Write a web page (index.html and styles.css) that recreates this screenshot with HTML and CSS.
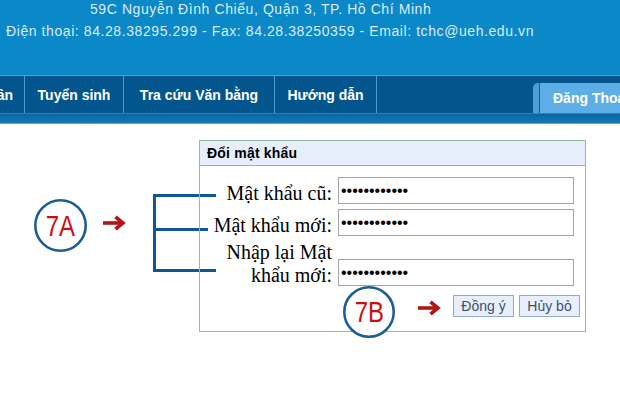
FILE: index.html
```html
<!DOCTYPE html>
<html lang="vi">
<head>
<meta charset="utf-8">
<title>Đổi mật khẩu</title>
<link rel="stylesheet" href="styles.css">
</head>
<body>
<header class="top">
  <div class="addr">59C Nguyễn Đình Chiểu, Quận 3, TP. Hồ Chí Minh</div>
  <div class="contact">Điện thoại: 84.28.38295.299 - Fax: 84.28.38250359 - Email: tchc@ueh.edu.vn</div>
</header>
<nav class="nav">
  <div class="nav-item nav-item--cut"><span>Học phần</span></div>
  <div class="nav-item nav-item--tuyen">Tuyển sinh</div>
  <div class="nav-item nav-item--tracuu">Tra cứu Văn bằng</div>
  <div class="nav-item nav-item--huongdan">Hướng dẫn</div>
  <div class="tab"><span class="tab-edge"></span><span class="tab-body">Đăng Thoát</span></div>
</nav>
<div class="subbar"></div>
<main class="content">
  <div class="bracket"></div>
  <div class="badge badge--a">
    <svg class="badge-ring" viewBox="0 0 53 53" width="53" height="53"><circle cx="26.5" cy="26.5" r="25.2" fill="#fff" stroke="#1b5d97" stroke-width="2.6"/></svg>
    <span class="badge-text">7A</span>
  </div>
  <svg class="arrow arrow--a" viewBox="0 0 23 16" width="23" height="16"><path d="M0 8H19" stroke="#b31515" stroke-width="3.6" fill="none"/><path d="M12.5 1.8L20 8L12.5 14.2" stroke="#b31515" stroke-width="3.6" fill="none"/></svg>

  <section class="dialog">
    <div class="dialog-head">Đổi mật khẩu</div>
    <div class="form">
      <label class="lbl">Mật khẩu cũ:</label>
      <input class="field" type="password" value="abcdefghijkl">
      <label class="lbl">Mật khẩu mới:</label>
      <input class="field" type="password" value="abcdefghijkl">
      <label class="lbl lbl--wrap">Nhập lại Mật khẩu mới:</label>
      <input class="field" type="password" value="abcdefghijkl">
    </div>
    <div class="actions">
      <button class="btn" type="button">Đồng ý</button>
      <button class="btn" type="button">Hủy bỏ</button>
    </div>
  </section>

  <div class="badge badge--b">
    <svg class="badge-ring" viewBox="0 0 53 53" width="52" height="52"><circle cx="26.5" cy="26.5" r="25.2" fill="#fff" stroke="#1b5d97" stroke-width="2.6"/></svg>
    <span class="badge-text">7B</span>
  </div>
  <svg class="arrow arrow--b" viewBox="0 0 23 16" width="23" height="16"><path d="M0 8H19" stroke="#b31515" stroke-width="3.6" fill="none"/><path d="M12.5 1.8L20 8L12.5 14.2" stroke="#b31515" stroke-width="3.6" fill="none"/></svg>
</main>
</body>
</html>
```

FILE: styles.css
```css
html, body {
  margin: 0;
  padding: 0;
}
body {
  width: 620px;
  height: 406px;
  overflow: hidden;
  background: #fff;
  font-family: "Liberation Sans", Arial, sans-serif;
}

/* header */
.top {
  height: 75px;
  background: #0a88c7;
  color: #dcebf6;
  font-size: 14px;
  letter-spacing: 0.58px;
  white-space: nowrap;
  overflow: hidden;
}
.addr {
  padding-left: 90px;
  line-height: 18px;
}
.contact {
  padding-left: 6px;
  line-height: 18px;
  margin-top: 4px;
}

/* nav */
.nav {
  display: flex;
  height: 37px;
  background: #03568d;
  border-top: 1px solid #4aa3dc;
  border-bottom: 1px solid #2a80bd;
  overflow: hidden;
  white-space: nowrap;
}
.nav-item {
  flex: none;
  box-sizing: border-box;
  display: flex;
  align-items: center;
  justify-content: center;
  border-right: 1px solid #4b9ad3;
  color: #fff;
  font-weight: bold;
  font-size: 14px;
}
.nav-item--cut {
  width: 25px;
  overflow: hidden;
  justify-content: flex-end;
  padding-right: 11px;
}
.nav-item--cut span { flex: none; }
.nav-item--tuyen { width: 99px; }
.nav-item--tracuu { width: 151px; }
.nav-item--huongdan { width: 102px; }

.tab {
  flex: none;
  align-self: flex-end;
  margin-left: 156px;
  height: 30px;
  display: flex;
}
.tab-edge {
  width: 6px;
  background: #4f9dd6;
  border-top-left-radius: 5px;
  border-right: 1px solid #1f5f90;
}
.tab-body {
  display: flex;
  align-items: center;
  padding: 0 20px 0 13px;
  background: #5dade6;
  color: #fff;
  font-weight: bold;
  font-size: 14px;
}

.subbar {
  height: 9px;
  background: linear-gradient(#0a66a3, #1477b6);
  border-bottom: 1px solid #5aa8dc;
}

/* content */
.content {
  position: relative;
  padding-top: 16px;
}

.dialog {
  position: relative;
  box-sizing: border-box;
  width: 387px;
  margin-left: 199px;
  border: 1px solid #93b9a8;
}
.dialog-head {
  height: 24px;
  line-height: 25px;
  padding-left: 7px;
  background: #e6eefc;
  border-bottom: 1px solid #93b9a8;
  font-weight: bold;
  font-size: 14px;
  letter-spacing: 0.2px;
  color: #000;
}
.form {
  display: grid;
  grid-template-columns: 132px 236px;
  column-gap: 6px;
  row-gap: 5px;
  align-items: end;
  padding: 11px 10px 0 0;
}
.lbl {
  text-align: right;
  font-family: "Liberation Serif", "Times New Roman", serif;
  font-size: 20px;
  line-height: 23px;
  color: #000;
  margin-bottom: -1px;
}
.field {
  box-sizing: border-box;
  width: 236px;
  height: 27px;
  margin: 0;
  padding: 0 0 0 2px;
  border: 1px solid #a5a5a5;
  border-radius: 0;
  font-family: "Liberation Sans", Arial, sans-serif;
  font-size: 16px;
  color: #000;
  background: #fff;
  outline: none;
}
.actions {
  display: flex;
  justify-content: flex-end;
  gap: 5px;
  padding: 9px 5px 14px 0;
}
.btn {
  box-sizing: border-box;
  width: 61px;
  height: 22px;
  margin: 0;
  padding: 0;
  border: 1px solid #91a9cb;
  border-radius: 0;
  background: #e7effc;
  color: #3f4f6b;
  font-family: "Liberation Sans", Arial, sans-serif;
  font-size: 14px;
}

/* annotations (overlay) */
.bracket {
  position: absolute;
  left: 153px;
  top: 70px;
  width: 60px;
  height: 72px;
  border: 3px solid #0f5896;
  border-right: none;
}
.bracket::after {
  content: "";
  position: absolute;
  left: 0;
  top: 31px;
  width: 52px;
  height: 3px;
  background: #0f5896;
}
.badge {
  position: absolute;
  display: flex;
  align-items: center;
  justify-content: center;
}
.badge--a {
  left: 34px;
  top: 75px;
  width: 53px;
  height: 53px;
}
.badge--b {
  left: 343px;
  top: 162px;
  width: 52px;
  height: 52px;
}
.badge-ring {
  position: absolute;
  left: 0;
  top: 0;
}
.badge-text {
  position: relative;
  font-family: "Liberation Sans", Arial, sans-serif;
  font-size: 30px;
  line-height: 30px;
  color: #cc1010;
  transform: scaleX(0.8);
}
.arrow {
  position: absolute;
}
.arrow--a {
  left: 103px;
  top: 91px;
}
.arrow--b {
  left: 418px;
  top: 176px;
}
```
